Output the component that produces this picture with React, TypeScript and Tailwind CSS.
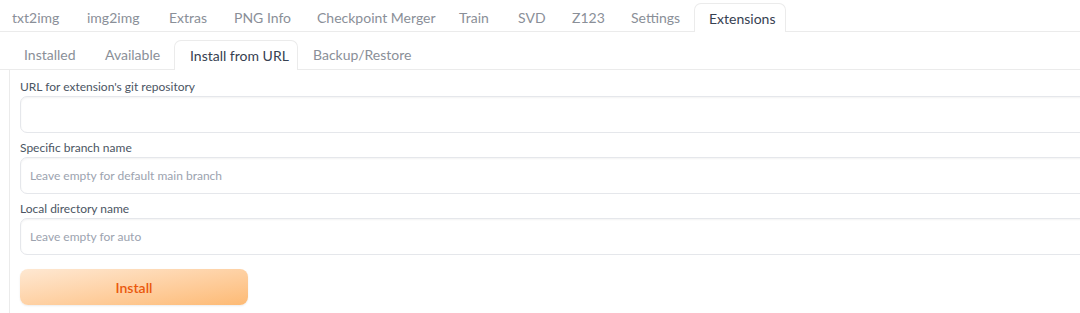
import React from 'react'

const topTabs = [
  { label: 'txt2img', w: 'w-[75px]' },
  { label: 'img2img', w: 'w-[82px]' },
  { label: 'Extras', w: 'w-[65px]' },
  { label: 'PNG Info', w: 'w-[83px]' },
  { label: 'Checkpoint Merger', w: 'w-[142px]' },
  { label: 'Train', w: 'w-[59px]' },
  { label: 'SVD', w: 'w-[54px]' },
  { label: 'Z123', w: 'w-[59px]' },
  { label: 'Settings', w: 'w-[77px]' },
  { label: 'Extensions', w: 'w-[92px]', active: true },
]

const subTabs = [
  { label: 'Installed', w: 'w-[81px]' },
  { label: 'Available', w: 'w-[84px]' },
  { label: 'Install from URL', w: 'w-[124px]', active: true },
  { label: 'Backup/Restore', w: 'w-[130px]' },
]

function Field({ label, placeholder }: { label: string; placeholder?: string }){
  return (
    <label className="flex flex-col">
      <span className="text-[12px] leading-[18px] text-[#4b5563]">{label}</span>
      <input
        className="w-[1100px] h-[37px] rounded-[7px] border border-[#e5e7eb] bg-white px-[9px] text-[12px] text-[#374151] placeholder:text-[#9ca3af] outline-none shadow-[inset_0_1px_2px_rgba(0,0,0,0.05)]"
        placeholder={placeholder}
      />
    </label>
  )
}

export default function App(){
  return (
    <div className="w-[1080px] h-[313px] overflow-hidden bg-white font-['Lato','Liberation_Sans',sans-serif]">
      <div className="flex h-[32px] items-end border-b border-[#ebebeb] ml-[-2px]">
        {topTabs.map(t => (
          <div
            key={t.label}
            className={`${t.w} shrink-0 pl-[14px] flex items-center text-[14px] ${t.active ? 'h-[29px] border border-b-0 border-[#ebebeb] rounded-t-[7px] bg-white text-[#374151] mb-[-1px]' : 'h-[28px] text-[#8a8f98]'}`}
          >
            {t.label}
          </div>
        ))}
      </div>
      <div className="flex h-[38px] items-end border-b border-[#ebebeb] pl-[9px]">
        {subTabs.map(t => (
          <div
            key={t.label}
            className={`${t.w} shrink-0 pl-[15px] flex items-center text-[14px] ${t.active ? 'h-[30px] border border-b-0 border-[#ebebeb] rounded-t-[7px] bg-white text-[#374151] mb-[-1px]' : 'h-[29px] text-[#8a8f98]'}`}
          >
            {t.label}
          </div>
        ))}
      </div>
      <div className="ml-[9px] border-l border-[#ebebeb] pl-[10px] pt-[8px] pb-[20px] flex flex-col gap-[6px]">
        <Field label="URL for extension's git repository" />
        <Field label="Specific branch name" placeholder="Leave empty for default main branch" />
        <Field label="Local directory name" placeholder="Leave empty for auto" />
        <button className="mt-[8px] w-[228px] h-[36px] rounded-[8px] bg-gradient-to-br from-[#fee8d2] to-[#fdba74] text-[#ea580c] text-[14px] font-semibold shadow-[0_1px_2px_rgba(0,0,0,0.08)]">
          Install
        </button>
      </div>
    </div>
  )
}
